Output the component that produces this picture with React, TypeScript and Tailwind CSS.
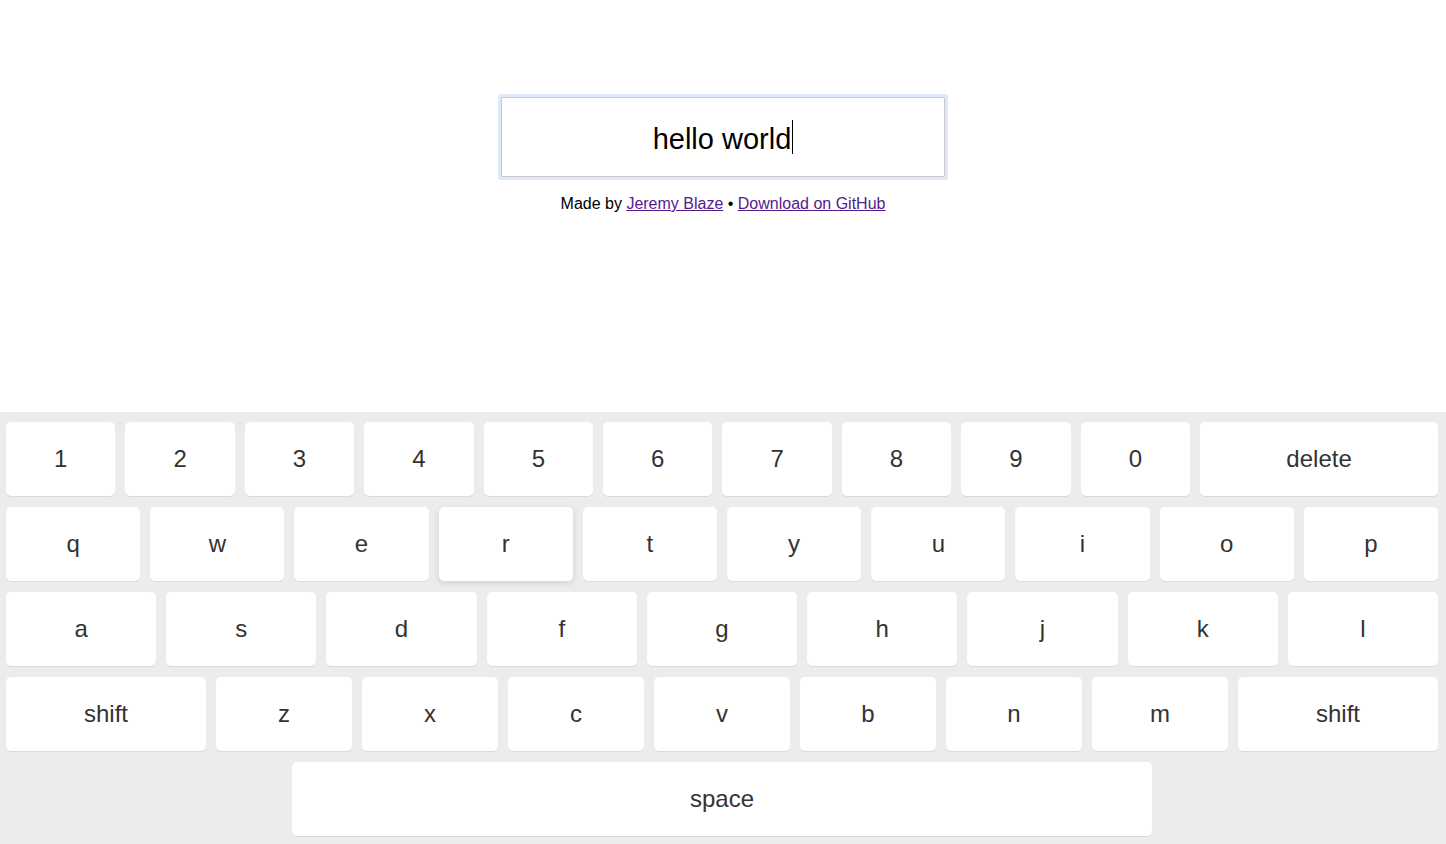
const rows: string[][] = [
  ["1", "2", "3", "4", "5", "6", "7", "8", "9", "0", "delete"],
  ["q", "w", "e", "r", "t", "y", "u", "i", "o", "p"],
  ["a", "s", "d", "f", "g", "h", "j", "k", "l"],
  ["shift", "z", "x", "c", "v", "b", "n", "m", "shift"],
];

const Key = ({label, hover}: {label: string; hover?: boolean}) => {
  const wide =
    label === "delete" ? "w-[238px] shrink-0" : label === "shift" ? "w-[200px] shrink-0" : "flex-1";
  return (
    <div
      className={`${wide} h-[74px] flex items-center justify-center bg-white rounded-[5px] text-[24px] text-[#333] ${
        hover ? "shadow-[0_2px_6px_rgba(0,0,0,0.12)]" : "shadow-[0_1px_0_#dadada]"
      }`}
    >
      {label}
    </div>
  );
};

const App = () => {
  return (
    <div className="w-full min-h-screen bg-white flex flex-col" style={{fontFamily: '"Liberation Sans", Arial, sans-serif'}}>
      <section className="h-[412px] flex flex-col items-center">
        <div className="mt-[97px] w-[444px] h-[80px] border border-[#c8c8c8] ring-[3px] ring-[#dde8f8] rounded-[1px] flex items-center justify-center">
          <span className="mt-[4px] text-[29px] text-black leading-none">hello world</span>
          <span className="ml-[1px] w-px h-[34px] bg-black"></span>
        </div>
        <p className="mt-[15px] text-[16px] text-black">
          Made by <a href="#" className="text-[#551a8b] underline">Jeremy Blaze</a> •{" "}
          <a href="#" className="text-[#551a8b] underline">Download on GitHub</a>
        </p>
      </section>
      <section className="flex-1 bg-[#ececec] pt-[10px] pl-[6px] pr-[8px] pb-[8px] flex flex-col gap-[11px]">
        {rows.map((row, i) => (
          <div key={i} className="flex gap-[10px]">
            {row.map((k, j) => (
              <Key key={j} label={k} hover={k === "r"} />
            ))}
          </div>
        ))}
        <div className="flex justify-center">
          <div className="w-[860px] h-[74px] flex items-center justify-center bg-white rounded-[5px] text-[24px] text-[#333] shadow-[0_1px_0_#dadada]">
            space
          </div>
        </div>
      </section>
    </div>
  );
};

export default App;
